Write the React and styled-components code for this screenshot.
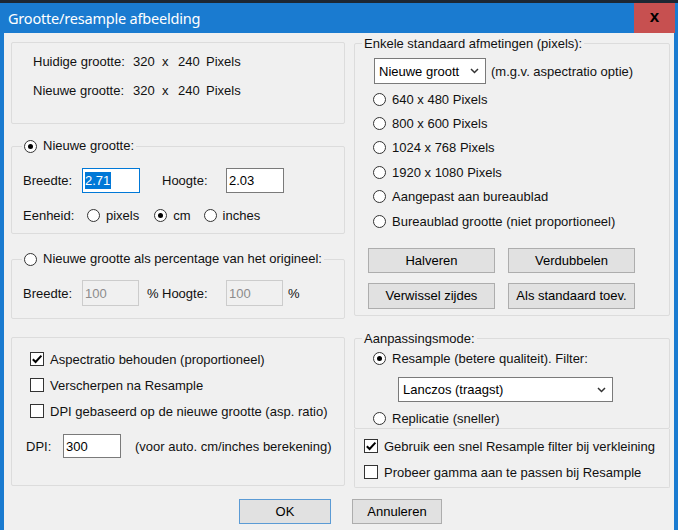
import React from 'react';
import styled, { createGlobalStyle } from 'styled-components';

const GlobalStyle = createGlobalStyle`
  html, body {
    margin: 0;
    padding: 0;
    background: #ffffff;
  }
  body {
    font-family: "Liberation Sans", Arial, sans-serif;
    font-size: 13px;
    color: #111;
  }
`;

// Window frame
const Window = styled.div`
  width: 678px;
  height: 530px;
  box-sizing: border-box;
  display: flex;
  flex-direction: column;
  background: #1a7bd0;
  border-top: 3px solid #1d2733;
  padding: 0 4px;
  overflow: hidden;
`;

const TitleBar = styled.div`
  height: 30px;
  flex: none;
  display: flex;
  align-items: center;
  justify-content: space-between;
`;

const Title = styled.div`
  padding-left: 4px;
  color: #ffffff;
  font-family: "Noto Sans", "Open Sans", sans-serif;
  font-size: 14.5px;
  letter-spacing: -0.2px;
`;

const CloseButton = styled.div`
  width: 41px;
  height: 30px;
  margin-right: -1px;
  background: #c75050;
  display: flex;
  align-items: center;
  justify-content: center;
  color: #000;
  font-family: "Liberation Sans", Arial, sans-serif;
  font-weight: bold;
  font-size: 17px;
  padding-bottom: 3px;
  box-sizing: border-box;
`;

const Body = styled.div`
  flex: 1;
  background: #f0f0f0;
  display: grid;
  grid-template-columns: 334px 316px;
  grid-template-rows: auto auto;
  column-gap: 9px;
  padding: 2px 4px 0 7px;
  align-content: start;
`;

const Column = styled.div`
  display: flex;
  flex-direction: column;
  padding-top: ${(p) => p.$top || 0}px;
`;

// Group boxes
const Panel = styled.div`
  box-sizing: border-box;
  height: ${(p) => p.$h}px;
  margin-top: ${(p) => p.$mt || 0}px;
  border: 1px solid #dcdcdc;
  border-radius: 2px;
  padding: ${(p) => p.$pad};
  display: flex;
  flex-direction: column;
  ${(p) => p.$noTop && 'border-top: none; border-radius: 0 0 2px 2px;'}
`;

const Group = styled.fieldset`
  box-sizing: border-box;
  height: ${(p) => p.$h}px;
  margin: ${(p) => p.$mt || 0}px 0 0;
  min-width: 0;
  border: 1px solid #dcdcdc;
  border-radius: 2px;
  padding: ${(p) => p.$pad};
  display: flex;
  flex-direction: column;
`;

const Legend = styled.legend`
  margin-left: ${(p) => p.$indent}px;
  padding: 0 2px;
  height: ${(p) => p.$h || 18}px;
  line-height: ${(p) => p.$h || 18}px;
  display: flex;
  align-items: center;
  gap: 6px;
`;

const Row = styled.div`
  display: flex;
  align-items: center;
  height: ${(p) => p.$h || 18}px;
  margin-top: ${(p) => p.$mt || 0}px;
  margin-left: ${(p) => p.$ml || 0}px;
  gap: ${(p) => p.$gap || 0}px;
  white-space: nowrap;
`;

const SizeGrid = styled.div`
  display: grid;
  grid-template-columns: 100px 29px 16px 28px auto;
  height: 16px;
  line-height: 16px;
  margin-top: ${(p) => p.$mt || 0}px;
`;

const Label = styled.span`
  flex: none;
  width: ${(p) => (p.$w ? `${p.$w}px` : 'auto')};
  margin-left: ${(p) => p.$ml || 0}px;
`;

// Inputs
const TextBox = styled.div`
  box-sizing: border-box;
  flex: none;
  width: ${(p) => p.$w}px;
  height: ${(p) => p.$h || 25}px;
  border: 1px solid ${(p) => (p.$focus ? '#0078d7' : p.$disabled ? '#cccccc' : '#7a7a7a')};
  background: ${(p) => (p.$disabled ? '#f0f0f0' : '#ffffff')};
  color: ${(p) => (p.$disabled ? '#8c8c8c' : '#000')};
  padding-left: 2px;
  display: flex;
  align-items: center;
`;

const Selected = styled.span`
  background: #0078d7;
  color: #fff;
  line-height: 17px;
  padding-right: 1px;
`;

const Select = styled.div`
  box-sizing: border-box;
  flex: none;
  width: ${(p) => p.$w}px;
  height: ${(p) => p.$h || 26}px;
  border: 1px solid #7a7a7a;
  background: #fff;
  padding: 0 6px 0 4px;
  display: flex;
  align-items: center;
  justify-content: space-between;
  color: #000;
`;

const Chevron = () => (
  <svg width="9" height="6" viewBox="0 0 9 6">
    <path d="M1 1 L4.5 4.5 L8 1" fill="none" stroke="#333" strokeWidth="1.5" />
  </svg>
);

const RadioCircle = styled.span`
  box-sizing: border-box;
  flex: none;
  width: 13px;
  height: 13px;
  border-radius: 50%;
  border: 1px solid #333;
  background: #fff;
  display: flex;
  align-items: center;
  justify-content: center;
  &::after {
    content: '';
    width: 5px;
    height: 5px;
    border-radius: 50%;
    background: #000;
    display: ${(p) => (p.$on ? 'block' : 'none')};
  }
`;

const Option = styled.span`
  display: inline-flex;
  align-items: center;
  gap: 6px;
  margin-left: ${(p) => p.$ml || 0}px;
`;

const Radio = ({ on, children, ml }) => (
  <Option $ml={ml}>
    <RadioCircle $on={on} />
    <span>{children}</span>
  </Option>
);

const CheckBoxFrame = styled.span`
  box-sizing: border-box;
  flex: none;
  width: 14px;
  height: 14px;
  border: 1px solid #333;
  background: #fff;
  display: flex;
  align-items: center;
  justify-content: center;
`;

const Check = ({ on, children }) => (
  <Option>
    <CheckBoxFrame>
      {on && (
        <svg width="12" height="12" viewBox="0 0 12 12">
          <path d="M1.8 6.2 L4.6 9 L10.4 2.6" fill="none" stroke="#000" strokeWidth="2" />
        </svg>
      )}
    </CheckBoxFrame>
    <span>{children}</span>
  </Option>
);

const Button = styled.div`
  box-sizing: border-box;
  flex: none;
  width: ${(p) => p.$w}px;
  height: ${(p) => p.$h || 25}px;
  border: 1px solid ${(p) => (p.$default ? '#5b9bd5' : '#adadad')};
  background: #e1e1e1;
  display: flex;
  align-items: center;
  justify-content: center;
  color: #000;
`;

const Footer = styled.div`
  grid-column: 1 / span 2;
  display: flex;
  justify-content: center;
  gap: 21px;
  margin-top: 11px;
`;

const presets = [
  '640 x 480 Pixels',
  '800 x 600 Pixels',
  '1024 x 768 Pixels',
  '1920 x 1080 Pixels',
  'Aangepast aan bureaublad',
  'Bureaublad grootte (niet proportioneel)',
];

export default function App() {
  return (
    <>
      <GlobalStyle />
      <Window>
        <TitleBar>
          <Title>Grootte/resample afbeelding</Title>
          <CloseButton>x</CloseButton>
        </TitleBar>
        <Body>
          <Column $top={7}>
            <Panel $h={82} $pad="11px 0 0 21px">
              <SizeGrid>
                <span>Huidige grootte:</span>
                <span>320</span>
                <span>x</span>
                <span>240</span>
                <span>Pixels</span>
              </SizeGrid>
              <SizeGrid $mt={13}>
                <span>Nieuwe grootte:</span>
                <span>320</span>
                <span>x</span>
                <span>240</span>
                <span>Pixels</span>
              </SizeGrid>
            </Panel>

            <Group $mt={13} $h={97} $pad="13px 0 0 11px">
              <Legend $indent={-1}>
                <RadioCircle $on />
                <span>Nieuwe grootte:</span>
              </Legend>
              <Row $h={25}>
                <Label $w={59}>Breedte:</Label>
                <TextBox $w={58} $focus>
                  <Selected>2.71</Selected>
                </TextBox>
                <Label $w={64} $ml={22}>Hoogte:</Label>
                <TextBox $w={58}>2.03</TextBox>
              </Row>
              <Row $mt={13} $gap={13}>
                <Label $w={51}>Eenheid:</Label>
                <Radio>pixels</Radio>
                <Radio on ml={2}>cm</Radio>
                <Radio>inches</Radio>
              </Row>
            </Group>

            <Group $mt={16} $h={69} $pad="12px 0 0 11px">
              <Legend $indent={-1}>
                <RadioCircle />
                <span>Nieuwe grootte als percentage van het origineel:</span>
              </Legend>
              <Row $h={26}>
                <Label $w={59}>Breedte:</Label>
                <TextBox $w={57} $h={26} $disabled>100</TextBox>
                <Label $w={15} $ml={8}>%</Label>
                <Label $w={64}>Hoogte:</Label>
                <TextBox $w={57} $h={26} $disabled>100</TextBox>
                <Label $ml={5}>%</Label>
              </Row>
            </Group>

            <Panel $mt={18} $h={149} $pad="8px 0 0 18px">
              <Row $h={26}>
                <Check on>Aspectratio behouden (proportioneel)</Check>
              </Row>
              <Row $h={26}>
                <Check>Verscherpen na Resample</Check>
              </Row>
              <Row $h={26}>
                <Check>DPI gebaseerd op de nieuwe grootte (asp. ratio)</Check>
              </Row>
              <Row $h={24} $mt={10} $ml={-4}>
                <Label $w={37}>DPI:</Label>
                <TextBox $w={58} $h={24}>300</TextBox>
                <Label $ml={14}>(voor auto. cm/inches berekening)</Label>
              </Row>
            </Panel>
          </Column>

          <Column>
            <Group $h={281} $pad="6px 0 0 0">
              <Legend $indent={7} $h={17}>Enkele standaard afmetingen (pixels):</Legend>
              <Row $h={26} $ml={19} $gap={5}>
                <Select $w={112}>
                  <span>Nieuwe groott</span>
                  <Chevron />
                </Select>
                <span>(m.g.v. aspectratio optie)</span>
              </Row>
              <div style={{ marginTop: 3 }}>
                {presets.map((p) => (
                  <Row key={p} $h={24.4} $ml={18}>
                    <Radio>{p}</Radio>
                  </Row>
                ))}
              </div>
              <Row $h={25} $mt={14.6} $ml={13} $gap={13}>
                <Button $w={127}>Halveren</Button>
                <Button $w={127}>Verdubbelen</Button>
              </Row>
              <Row $h={26} $mt={10} $ml={13} $gap={13}>
                <Button $w={127} $h={26}>Verwissel zijdes</Button>
                <Button $w={127} $h={26}>Als standaard toev.</Button>
              </Row>
            </Group>

            <Group $mt={14} $h={99} $pad="2px 0 0 0">
              <Legend $indent={7} $h={17}>Aanpassingsmode:</Legend>
              <Row $ml={18}>
                <Radio on>Resample (betere qualiteit). Filter:</Radio>
              </Row>
              <Row $h={25} $mt={10} $ml={43}>
                <Select $w={215} $h={25}>
                  <span>Lanczos (traagst)</span>
                  <Chevron />
                </Select>
              </Row>
              <Row $mt={7} $ml={18}>
                <Radio>Replicatie (sneller)</Radio>
              </Row>
            </Group>
            <Panel $h={59} $noTop $pad="4px 0 0 9px">
              <Row $h={26}>
                <Check on>Gebruik een snel Resample filter bij verkleining</Check>
              </Row>
              <Row $h={26}>
                <Check>Probeer gamma aan te passen bij Resample</Check>
              </Row>
            </Panel>
          </Column>

          <Footer>
            <Button $w={92} $default>OK</Button>
            <Button $w={90}>Annuleren</Button>
          </Footer>
        </Body>
      </Window>
    </>
  );
}
